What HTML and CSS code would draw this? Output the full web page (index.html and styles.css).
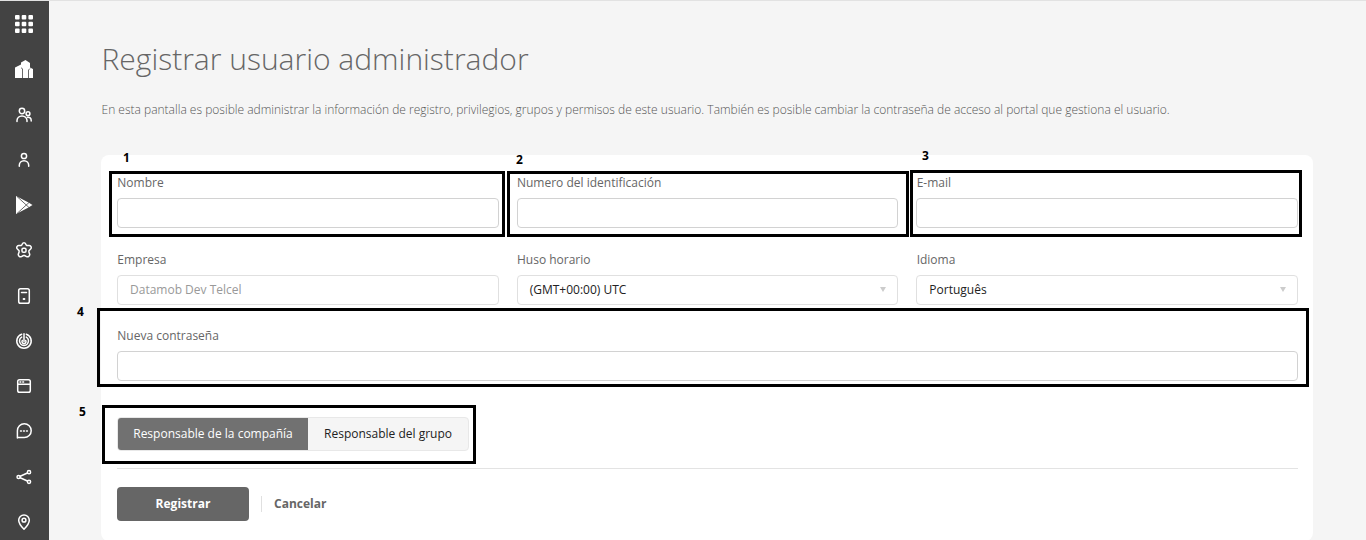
FILE: index.html
```html
<!DOCTYPE html>
<html lang="es">
<head>
<meta charset="utf-8">
<title>Registrar usuario administrador</title>
<link rel="stylesheet" href="styles.css">
</head>
<body>
<div class="app">
  <nav class="sidebar">
    <a class="nav-item"><svg class="icon" viewBox="0 0 20 20"><g fill="#fff"><rect x="1" y="1" width="4.6" height="4.6" rx="1"/><rect x="7.7" y="1" width="4.6" height="4.6" rx="1"/><rect x="14.4" y="1" width="4.6" height="4.6" rx="1"/><rect x="1" y="7.7" width="4.6" height="4.6" rx="1"/><rect x="7.7" y="7.7" width="4.6" height="4.6" rx="1"/><rect x="14.4" y="7.7" width="4.6" height="4.6" rx="1"/><rect x="1" y="14.4" width="4.6" height="4.6" rx="1"/><rect x="7.7" y="14.4" width="4.6" height="4.6" rx="1"/><rect x="14.4" y="14.4" width="4.6" height="4.6" rx="1"/></g></svg></a>
    <a class="nav-item"><svg class="icon" viewBox="0 0 20 20"><path fill="#fff" d="M1 19V8.500L7 5.500V3.500L11.500 1 16 4v4.500l3 1.500v9z"/><path class="cut" d="M8.500 19V9.800L7 8.800M14.500 19V11l1.500-1.500"/></svg></a>
    <a class="nav-item"><svg class="icon line" viewBox="0 0 20 20"><circle cx="8" cy="6" r="2.700"/><path d="M3 16.500v-1a5 4.600 0 0 1 10 0v1"/><circle cx="14" cy="8.700" r="1.900"/><path d="M13.500 12.200c2.200-.3 3.700 1 3.700 3.200v.6"/></svg></a>
    <a class="nav-item"><svg class="icon line" viewBox="0 0 20 20"><circle cx="10" cy="6" r="2.600"/><path d="M5.300 16.200v-.9a4.700 4.600 0 0 1 9.400 0v.9"/></svg></a>
    <a class="nav-item"><svg class="icon" viewBox="0 0 20 20"><path fill="#fff" d="M2 1l12.500 6.500L18.500 10l-4 2.500L2 19z"/><path class="cut" d="M3 1.500l12 11M3 18.500l12-11"/></svg></a>
    <a class="nav-item"><svg class="icon line" viewBox="0 0 20 20"><path d="M8 4.700C8.300 3 9 2.700 10 2.700s1.700.3 2 2l.8.800 2.500-.1c1.700.2 2.600 2.500 1.300 3.600l-1.700 1.800v1.100l.8 2.300c.2 1.800-1.600 3.200-3.100 2.400L10.500 15.500h-1l-2.100 1.100c-1.500.8-3.300-.6-3.100-2.400l.8-2.300v-1.100L3.400 9c-1.300-1.100-.4-3.400 1.300-3.600l2.500.1z"/><rect x="8" y="8.200" width="4" height="4" rx="1.300"/></svg></a>
    <a class="nav-item"><svg class="icon line" viewBox="0 0 20 20"><rect x="4.700" y="2.700" width="10.600" height="14.600" rx="1.800"/><path d="M7.500 6.500h5"/><path d="M9.600 13h.8" stroke-width="2"/></svg></a>
    <a class="nav-item"><svg class="icon line" viewBox="0 0 20 20"><path d="M10 10.500V2.800"/><path d="M12.300 3.200a7.200 7.200 0 1 1-4.600 0"/><path d="M12.300 6.100a4.500 4.500 0 1 1-4.600 0"/><path d="M8.300 9.500a2 2 0 1 0 3.400 0"/></svg></a>
    <a class="nav-item"><svg class="icon line" viewBox="0 0 20 20"><rect x="3.700" y="3.700" width="12.600" height="12.600" rx="1.800"/><path d="M3.700 8.300h12.600M6 6h.8M8.800 6h.8"/></svg></a>
    <a class="nav-item"><svg class="icon line" viewBox="0 0 20 20"><path d="M3.400 17V9.700a6.900 6.900 0 1 1 6.900 6.900H3.400"/><path d="M6.500 10h.9M9.500 10h.9M12.500 10h.9"/></svg></a>
    <a class="nav-item"><svg class="icon line" viewBox="0 0 20 20"><path d="M6.200 9.200l7.200-3.200M6.200 10.800l7.200 3.200"/><circle cx="4.600" cy="10" r="1.600"/><circle cx="15" cy="5.200" r="1.600"/><circle cx="15" cy="14.800" r="1.600"/></svg></a>
    <a class="nav-item"><svg class="icon line" viewBox="0 0 20 20"><path d="M10 17.200C7 14.200 4.700 11.500 4.700 8.200a5.300 5.300 0 0 1 10.600 0c0 3.300-2.300 6-5.300 9z"/><circle cx="10" cy="8.200" r="1.900"/></svg></a>
  </nav>
  <main class="content">
    <h1 class="title">Registrar usuario administrador</h1>
    <p class="intro">En esta pantalla es posible administrar la información de registro, privilegios, grupos y permisos de este usuario. También es posible cambiar la contraseña de acceso al portal que gestiona el usuario.</p>
    <form class="card">
      <div class="fields">
        <div class="field"><label class="label">Nombre</label><div class="input"></div></div>
        <div class="field"><label class="label">Numero del identificación</label><div class="input"></div></div>
        <div class="field"><label class="label">E-mail</label><div class="input"></div></div>
        <div class="field"><label class="label">Empresa</label><div class="input disabled">Datamob Dev Telcel</div></div>
        <div class="field"><label class="label">Huso horario</label><div class="input select">(GMT+00:00) UTC<i class="caret"></i></div></div>
        <div class="field"><label class="label">Idioma</label><div class="input select">Português<i class="caret"></i></div></div>
        <div class="field wide"><label class="label">Nueva contraseña</label><div class="input"></div></div>
      </div>
      <div class="toggle"><span class="option active">Responsable de la compañía</span><span class="option">Responsable del grupo</span></div>
      <div class="actions"><a class="submit">Registrar</a><a class="cancel">Cancelar</a></div>
    </form>
  </main>
</div>
<div class="mark mark1"></div><div class="mark mark2"></div><div class="mark mark3"></div><div class="mark mark4"></div><div class="mark mark5"></div>
<b class="num num1">1</b><b class="num num2">2</b><b class="num num3">3</b><b class="num num4">4</b><b class="num num5">5</b>
</body>
</html>
```
FILE: styles.css
```css
* { box-sizing: border-box; }
body { margin: 0; height: 540px; overflow: hidden; background: #f5f5f5; font-family: "Open Sans", sans-serif; font-size: 12px; color: #666; }
.app { display: flex; height: 540px; border-top: 1px solid #e2e2e2; }
.sidebar { width: 49px; padding-top: .4px; background: #434343; display: flex; flex-direction: column; align-items: flex-start; flex: none; }
.nav-item { width: 48px; height: 45.28px; flex: none; display: flex; align-items: center; justify-content: center; }
.icon { width: 20px; height: 20px; display: block; }
.line { fill: none; stroke: #fff; stroke-width: 1.5; stroke-linecap: round; stroke-linejoin: round; }
.cut { fill: none; stroke: #434343; stroke-width: .8; }
.content { flex: 1; padding: 34px 53px 0 52px; }
.title { margin: 0; height: 48px; line-height: 48px; font-size: 30px; font-weight: 300; color: #666; white-space: nowrap; padding-left: .5px; }
.intro { margin: 18px 0 0; height: 18px; line-height: 18px; font-weight: 300; color: #555; white-space: nowrap; padding-left: .5px; }
.card { margin-top: 36px; height: 386px; background: #fff; border-radius: 8px; padding: 18px 15px 0 16px; }
.fields { display: grid; grid-template-columns: repeat(3, 1fr); gap: 17px 18px; }
.field { height: 59.500px; }
.wide { grid-column: 1 / -1; }
.label { display: block; height: 25px; line-height: 20px; padding-left: .3px; }
.input { height: 30px; border: 1px solid #d2d2d2; border-radius: 4px; display: flex; align-items: center; padding: 0 12px; background: #fff; }
.disabled { color: #999; border-color: #e0e0e0; }
.select { color: #222; border-color: #e0e0e0; justify-content: space-between; }
.caret { border: 3.500px solid transparent; border-top: 5px solid #ccc; border-bottom: 0; margin-right: -1px; }
.toggle { display: flex; width: 352px; height: 34px; margin-top: 31.500px; border: 1px solid #e8e8e8; border-radius: 4px; overflow: hidden; background: #f5f5f5; }
.option { flex: 1; display: flex; align-items: center; justify-content: center; color: #222; white-space: nowrap; line-height: 16px; padding-bottom: 1px; }
.active { flex: 0 0 190px; background: #717171; color: #fff; }
.actions { margin-top: 17px; border-top: 1px solid #e3e3e3; padding-top: 18px; display: flex; align-items: center; font-weight: 700; }
.submit { width: 132px; height: 34px; border-radius: 4px; background: #666; color: #fff; display: flex; align-items: center; justify-content: center; line-height: 16px; padding-bottom: 1px; }
.cancel { margin-left: 12px; padding-left: 12px; border-left: 1px solid #e0e0e0; line-height: 16px; }
/* Numbered callouts over the form */
.mark { position: absolute; border: 3px solid #000; }
.mark1 { left: 109px; top: 171px; width: 396px; height: 66px; }
.mark2 { left: 507px; top: 171px; width: 402px; height: 66px; }
.mark3 { left: 910px; top: 170px; width: 392px; height: 67px; }
.mark4 { left: 97px; top: 308px; width: 1212px; height: 79px; }
.mark5 { left: 102px; top: 405px; width: 374px; height: 59px; }
.num { position: absolute; width: 12px; text-align: center; font-size: 12px; line-height: 16px; color: #000; }
.num1 { left: 120.500px; top: 150px; }
.num2 { left: 513.500px; top: 152px; }
.num3 { left: 919.500px; top: 148px; }
.num4 { left: 74.500px; top: 304px; }
.num5 { left: 76.500px; top: 404px; }
```
